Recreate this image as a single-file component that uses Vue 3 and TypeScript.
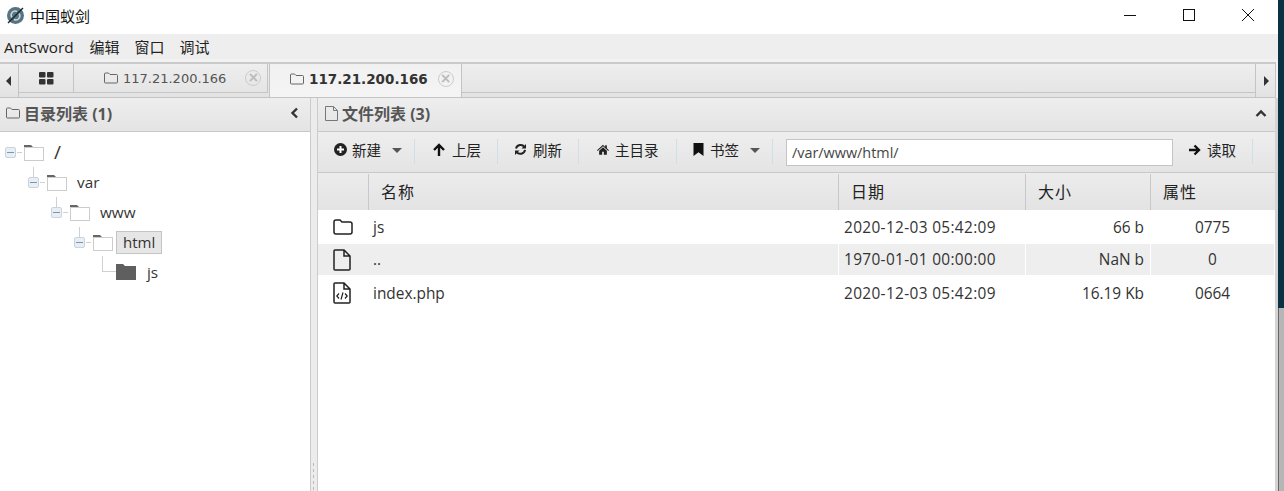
<script setup lang="ts">
interface FileRow {
  name: string
  date: string
  size: string
  attr: string
  icon: 'folder' | 'file' | 'code'
}

const files: FileRow[] = [
  { name: 'js', date: '2020-12-03 05:42:09', size: '66 b', attr: '0775', icon: 'folder' },
  { name: '..', date: '1970-01-01 00:00:00', size: 'NaN b', attr: '0', icon: 'file' },
  { name: 'index.php', date: '2020-12-03 05:42:09', size: '16.19 Kb', attr: '0664', icon: 'code' },
]

const tree = [
  { name: '/', depth: 0 },
  { name: 'var', depth: 1 },
  { name: 'www', depth: 2 },
  { name: 'html', depth: 3, selected: true },
]
</script>

<template>
  <div class="app">
    <div class="window">
      <header class="titlebar">
        <svg class="logo" width="19" height="19" viewBox="0 0 19 19">
          <circle cx="9.500" cy="9.500" r="8.500" fill="#567582" />
          <path d="M6 11.500a4 4 0 0 1 5-6M13 7.500a4 4 0 0 1-5 6" fill="none" stroke="#c9d5da" stroke-width="1.500" />
          <path d="M2 17 17 2" stroke="#1b2a31" stroke-width="1.500" />
        </svg>
        <span class="title">中国蚁剑</span>
        <div class="win-btns">
          <svg width="14" height="14" viewBox="0 0 14 14"><path d="M1 7.500h12" stroke="#111" fill="none" /></svg>
          <svg width="14" height="14" viewBox="0 0 14 14"><rect x="1.500" y="1.500" width="11" height="11" stroke="#111" fill="none" /></svg>
          <svg width="14" height="14" viewBox="0 0 14 14"><path d="M1 1l12 12M13 1 1 13" stroke="#111" fill="none" /></svg>
        </div>
      </header>

      <nav class="menubar">
        <span class="latin">AntSword</span><span>编辑</span><span>窗口</span><span>调试</span>
      </nav>

      <div class="tabwrap">
        <div class="tabbar">
          <div class="tab-arrow">
            <svg width="6" height="10" viewBox="0 0 6 10"><path d="M5 0v10L0 5z" fill="#333" /></svg>
          </div>
          <div class="tab tab-home">
            <svg width="15" height="13" viewBox="0 0 15 13" fill="#333">
              <rect width="6.500" height="5.500" rx="1" />
              <rect x="8" width="6.500" height="5.500" rx="1" />
              <rect y="7" width="6.500" height="5.500" rx="1" />
              <rect x="8" y="7" width="6.500" height="5.500" rx="1" />
            </svg>
          </div>
          <div class="tab tab-ip">
            <svg class="fold" width="14" height="12" viewBox="0 0 14 12"><path d="M.5 2A1 1 0 0 1 1.500 1h3l1.500 1.500h6.500a1 1 0 0 1 1 1v6.500a1 1 0 0 1-1 1h-11a1 1 0 0 1-1-1z" fill="none" stroke="#666" /></svg>
            <span class="ip">117.21.200.166</span>
            <span class="close">×</span>
          </div>
          <div class="tab tab-ip active">
            <svg class="fold" width="14" height="12" viewBox="0 0 14 12"><path d="M.5 2A1 1 0 0 1 1.500 1h3l1.500 1.500h6.500a1 1 0 0 1 1 1v6.500a1 1 0 0 1-1 1h-11a1 1 0 0 1-1-1z" fill="none" stroke="#666" /></svg>
            <span class="ip">117.21.200.166</span>
            <span class="close">×</span>
          </div>
          <div class="tab-fill"></div>
          <div class="tab-arrow next">
            <svg width="6" height="10" viewBox="0 0 6 10"><path d="M1 0v10l5-5z" fill="#333" /></svg>
          </div>
        </div>
      </div>

      <div class="panes">
        <aside class="left">
          <div class="cell-head">
            <svg width="14" height="12" viewBox="0 0 14 12"><path d="M.5 2A1 1 0 0 1 1.500 1h3l1.500 1.500h6.500a1 1 0 0 1 1 1v6.500a1 1 0 0 1-1 1h-11a1 1 0 0 1-1-1z" fill="none" stroke="#666" /></svg>
            <span class="head-text">目录列表 (1)</span>
            <svg class="collapse" width="9" height="12" viewBox="0 0 9 12"><path d="M7 1.500 2.500 6 7 10.500" fill="none" stroke="#333" stroke-width="2.400" /></svg>
          </div>
          <div class="tree">
            <div v-for="n in tree" :key="n.name" class="tree-row" :style="{ paddingLeft: n.depth * 23 + 5 + 'px' }">
              <span class="minus" :class="{ child: n.depth > 0 }"><i></i></span>
              <span class="dash"></span>
              <svg class="tfold" width="20" height="17" viewBox="0 0 20 17">
                <path d="M0 1h7l2 2h11v2H0z" fill="#666" />
                <rect x=".5" y="3.500" width="19" height="13" fill="#fff" stroke="#ccc" />
              </svg>
              <span class="tname" :class="{ selected: n.selected, root: n.depth === 0 }">{{ n.name }}</span>
            </div>
            <div class="tree-row last">
              <span class="elbow"></span>
              <svg class="tfold" width="20" height="16" viewBox="0 0 20 16">
                <path d="M0 0h7l2 2h11v14H0z" fill="#5f5f5f" />
              </svg>
              <span class="tname">js</span>
            </div>
          </div>
        </aside>

        <div class="splitter"><div class="grip"></div></div>

        <main class="content">
          <div class="cell-head">
            <svg width="13" height="15" viewBox="0 0 13 15"><path d="M.5.500h8l4 4v10H.5zM8.500.500v4h4" fill="none" stroke="#777" /></svg>
            <span class="head-text">文件列表 (3)</span>
            <svg class="collapse" width="12" height="9" viewBox="0 0 12 9"><path d="M1.500 7 6 2.500 10.500 7" fill="none" stroke="#333" stroke-width="2.400" /></svg>
          </div>

          <div class="toolbar">
            <div class="tool t-new">
              <svg width="13" height="13" viewBox="0 0 13 13"><circle cx="6.500" cy="6.500" r="6.500" fill="#222" /><path d="M6.500 3v7M3 6.500h7" stroke="#fff" stroke-width="2" /></svg>
              <span>新建</span><i class="caret"></i>
            </div>
            <div class="tool t-up">
              <svg width="14" height="13" viewBox="0 0 14 13"><path d="M7 13V2M2 7l5-5 5 5" fill="none" stroke="#111" stroke-width="2.400" /></svg>
              <span>上层</span>
            </div>
            <div class="tool t-refresh">
              <svg width="13" height="13" viewBox="0 0 13 13" fill="none" stroke="#222" stroke-width="2"><path d="M2 5.500A4.800 4.800 0 0 1 10.500 4" /><path d="M11 6.800A4.800 4.800 0 0 1 2.500 9" /><path d="M12 1v4.500H7.500z" fill="#222" stroke="none" /><path d="M1 12V7.500h4.500z" fill="#222" stroke="none" /></svg>
              <span>刷新</span>
            </div>
            <div class="tool t-home">
              <svg width="12" height="11" viewBox="0 0 14 12"><path d="M7 .500 0 6.800l.8.900L7 2.200l6.200 5.500.8-.9-2.500-2.200V1h-2v2zM2.500 7.500V12H6V8.500h2V12h3.500V7.500L7 3.500z" fill="#222" /></svg>
              <span>主目录</span>
            </div>
            <div class="tool t-mark">
              <svg width="11" height="13" viewBox="0 0 11 13"><path d="M.5 0h10v13L5.500 9.200.5 13z" fill="#111" /></svg>
              <span>书签</span><i class="caret"></i>
            </div>
            <input class="path" value="/var/www/html/" />
            <div class="tool t-read">
              <svg width="13" height="12" viewBox="0 0 13 12"><path d="M1 6h10M6.500 1.500 11 6l-4.500 4.500" fill="none" stroke="#111" stroke-width="2.400" /></svg>
              <span>读取</span>
            </div>
          </div>

          <div class="grid-head">
            <div class="col c-icon"></div>
            <div class="col c-name">名称</div>
            <div class="col c-date">日期</div>
            <div class="col c-size">大小</div>
            <div class="col c-attr">属性</div>
          </div>

          <div v-for="f in files" :key="f.name" class="grid-row">
            <div class="c-icon icon-cell">
              <svg v-if="f.icon === 'folder'" width="20" height="18" viewBox="0 0 20 18"><path d="M1 4a2 2 0 0 1 2-2h4l2 2h8a2 2 0 0 1 2 2v8a2 2 0 0 1-2 2H3a2 2 0 0 1-2-2z" fill="none" stroke="#222" stroke-width="1.500" /></svg>
              <svg v-else width="18" height="22" viewBox="0 0 18 22">
                <path d="M1 2a1 1 0 0 1 1-1h9l6 6v13a1 1 0 0 1-1 1H2a1 1 0 0 1-1-1zM11 1v6h6" fill="none" stroke="#222" stroke-width="1.500" />
                <path v-if="f.icon === 'code'" d="M6 11.500 3.800 14 6 16.500M12 11.500l2.200 2.500-2.200 2.500M10 10.500 8 17.500" fill="none" stroke="#222" stroke-width="1.200" />
              </svg>
            </div>
            <div class="c-name cell">{{ f.name }}</div>
            <div class="c-date cell stamp">{{ f.date }}</div>
            <div class="c-size cell num">{{ f.size }}</div>
            <div class="c-attr cell ctr">{{ f.attr }}</div>
          </div>
        </main>
      </div>
    </div>
    <div class="desk">
      <div class="desk-top"></div>
      <div class="desk-low"></div>
    </div>
  </div>
</template>

<style>
html, body { margin: 0; padding: 0; overflow: hidden; background: #fff; }
</style>

<style scoped>
.app {
  display: flex;
  width: 1284px;
  height: 491px;
  overflow: hidden;
  font-family: "Open Sans", "Noto Sans CJK SC", sans-serif;
  color: #333;
}
.window { width: 1278px; flex: none; display: flex; flex-direction: column; background: #fff; }
.desk { width: 6px; display: flex; flex-direction: column; }
.desk-top { height: 308px; background: #0b3244; }
.desk-low { flex: 1; background: #b6b6b6; border-left: 1px solid #666; }

.titlebar { height: 34px; box-sizing: border-box; display: flex; align-items: center; padding: 0 0 4px 6px; flex: none; }
.title { margin-left: 5px; font-size: 15px; color: #111; }
.win-btns { margin-left: auto; display: flex; gap: 45px; padding-right: 23px; }

.menubar {
  height: 25px;
  background: #eee;
  flex: none;
  display: flex;
  align-items: center;
  gap: 15px;
  padding: 0 0 0 4px;
  font-size: 15px;
  color: #222;
  box-sizing: border-box;
}
.menubar .latin { font-size: 15.300px; margin-right: 1px; }

.tabwrap { flex: none; background: #f2f2f2; padding: 3px 2px 0 0; }
.tabbar {
  height: 36px;
  display: flex;
  box-sizing: border-box;
  background: linear-gradient(#eee, #e3e3e3);
  border-top: 2px solid #cacaca;
  border-right: 1px solid #c4c4c4;
  border-bottom: 1px solid #c4c4c4;
}
.tab-arrow { width: 19px; display: flex; align-items: center; justify-content: center; border-right: 1px solid #c4c4c4; flex: none; box-sizing: border-box; }
.tab-arrow.next { width: 20px; border-right: 0; border-left: 1px solid #c4c4c4; padding-left: 1px; }
.tab {
  height: 29px;
  box-sizing: border-box;
  border-right: 1px solid #c4c4c4;
  border-bottom: 1px solid #c4c4c4;
  display: flex;
  align-items: center;
  flex: none;
  font-family: "DejaVu Sans", sans-serif;
  font-size: 13px;
}
.tab-home { width: 55px; justify-content: center; }
.tab-ip { width: 194px; padding-left: 30px; }
.tab-ip .fold { margin-right: 5px; }
.tab-ip .ip { color: #555; }
.tab-ip .close {
  margin-left: 19px;
  width: 14px;
  height: 14px;
  border: 1px solid #ccc;
  border-radius: 50%;
  color: #bbb;
  font-size: 14px;
  font-weight: 700;
  line-height: 13px;
  text-align: center;
}
.tab.active {
  width: 193px;
  height: 33px;
  margin-left: 1px;
  padding: 0 0 4px 20px;
  background: linear-gradient(#f1f1f1, #f4f4f4);
  border-bottom: 0;
  border-left: 1px solid #c4c4c4;
  border-right: 1px solid #c4c4c4;
}
.tab.active .ip { font-size: 13.500px; font-weight: 700; color: #333; }
.tab.active .close { margin-left: 10px; }
.tab-fill { flex: 1; height: 29px; border-bottom: 1px solid #c4c4c4; box-sizing: border-box; }

.panes { flex: 1; display: flex; min-height: 0; }
.left { width: 310px; flex: none; }
.splitter { width: 8px; flex: none; position: relative; background: #ececec; border-left: 1px solid #ccc; border-right: 1px solid #ccc; box-sizing: border-box; }
.grip { position: absolute; left: 2px; bottom: 0; height: 28px; width: 1px; background: repeating-linear-gradient(#bbb 0 3px, transparent 3px 6px); }
.content { flex: 1; min-width: 0; border-right: 3px solid #d4d4d4; }

.cell-head {
  height: 34px;
  box-sizing: border-box;
  display: flex;
  align-items: center;
  gap: 4px;
  padding: 0 11px 3px 6px;
  background: linear-gradient(#eee, #e4e4e4);
  border-bottom: 1px solid #c8c8c8;
  font-size: 16px;
  font-weight: 700;
}
.content .cell-head { padding-left: 7px; padding-right: 8px; }
.head-text { color: #555; }
.collapse { margin-left: auto; }

.tree { padding-top: 5px; font-size: 15.300px; color: #333; }
.tree-row { height: 30px; display: flex; align-items: center; box-sizing: border-box; }
.minus { width: 11px; height: 11px; box-sizing: border-box; border: 1px solid #c8d4de; background: #e8eef3; border-radius: 2px; display: flex; align-items: center; justify-content: center; flex: none; position: relative; }
.minus i { width: 7px; height: 1px; background: #7a96ab; display: block; }
.minus.child::before { content: ""; position: absolute; left: 4px; top: -11px; width: 1px; height: 10px; background: #d0d0d0; }
.dash { width: 5px; height: 1px; background: #d0d0d0; flex: none; margin: 0 2px 0 1px; }
.tfold { flex: none; }
.tname { margin-left: 10px; }
.tname.root { font-size: 19px; line-height: 20px; }
.tname.selected {
  margin-left: 3px;
  padding: 0 6px;
  font-size: 15px;
  background: #e6e6e6;
  border: 1px solid #c4c4c4;
  line-height: 21px;
}
.tree-row.last { padding-left: 102px; }
.last .tname { margin-left: 11px; }
.elbow { width: 14px; height: 16px; margin-bottom: 16px; border-left: 1px solid #d0d0d0; border-bottom: 1px solid #d0d0d0; box-sizing: border-box; flex: none; }

.toolbar {
  height: 41px;
  display: flex;
  align-items: flex-start;
  box-sizing: border-box;
  padding: 7px 0 0 16px;
  background: linear-gradient(#eee, #e4e4e4);
  border-bottom: 1px solid #c8c8c8;
  font-size: 14.500px;
  color: #222;
}
.tool {
  height: 25px;
  display: flex;
  align-items: center;
  flex: none;
  box-sizing: border-box;
  padding-bottom: 4px;
  border-right: 1px solid #cfdfe6;
}
.tool svg { margin-right: 6px; }
.t-new { width: 81px; }
.t-new svg { margin-right: 5px; }
.t-up { width: 83px; padding-left: 17px; }
.t-refresh { width: 81px; padding-left: 16px; }
.t-home { width: 98px; padding-left: 18px; }
.t-mark { width: 96px; padding-left: 16px; }
.t-read { width: 80px; padding-left: 15px; }
.caret { width: 0; height: 0; border: 5px solid transparent; border-top-color: #555; border-bottom: 0; margin: 2px 0 0 11px; }
.path {
  width: 387px;
  height: 27px;
  flex: none;
  box-sizing: border-box;
  border: 1px solid #c4c4c4;
  background: #fff;
  margin-left: 13px;
  padding: 0 5px;
  font: 14.400px "Open Sans", sans-serif;
  color: #444;
  outline: none;
}

.grid-head { height: 37px; display: flex; background: linear-gradient(#ececec, #e3e3e3); box-sizing: border-box; padding-top: 1px; }
.col { font-size: 16px; letter-spacing: 1px; color: #222; display: flex; align-items: center; padding: 0 0 3px 12px; border-right: 1px solid #c8c8c8; box-sizing: border-box; }
.c-icon { width: 51px; flex: none; }
.c-name { width: 470px; flex: none; }
.c-date { width: 187px; flex: none; }
.c-size { width: 125px; flex: none; }
.c-attr { flex: 1; }
.col.c-attr { border-right: 0; }

.grid-row { display: flex; height: 31px; background: #fff; font-size: 15.400px; color: #333; }
.grid-head + .grid-row { height: 34px; }
.grid-head + .grid-row + .grid-row { background: #eee; }
.grid-head + .grid-row + .grid-row + .grid-row { height: 36px; background: #fff; }
.grid-head + .grid-row + .grid-row .cell { border-right-color: #fff; }
.grid-head + .grid-row + .grid-row + .grid-row .cell { border-right-color: transparent; }
.icon-cell { display: flex; align-items: center; padding-left: 15px; box-sizing: border-box; }
.cell { display: flex; align-items: center; box-sizing: border-box; padding: 0 5px; border-right: 1px solid transparent; }
.cell.c-name { padding-left: 4px; }
.stamp { letter-spacing: .35px; }
.num { justify-content: flex-end; padding-right: 6px; }
.ctr { justify-content: center; }
</style>
